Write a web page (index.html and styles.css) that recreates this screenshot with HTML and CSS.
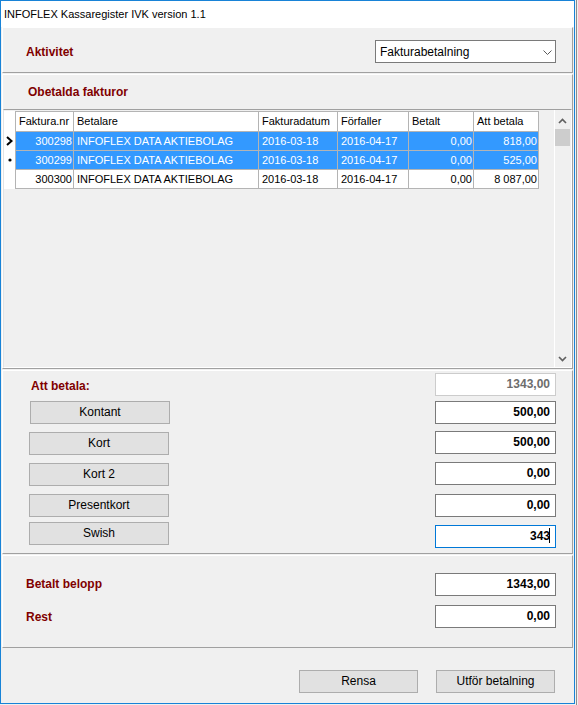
FILE: index.html
```html
<!DOCTYPE html>
<html lang="sv">
<head>
<meta charset="utf-8">
<title>INFOFLEX Kassaregister IVK version 1.1</title>
<link rel="stylesheet" href="styles.css">
</head>
<body>
<div class="screen">
  <div class="window">
    <div class="titlebar">INFOFLEX Kassaregister IVK version 1.1</div>
    <div class="client">
      <section class="panel panel-activity">
        <span class="label">Aktivitet</span>
        <div class="combo">
          <span>Fakturabetalning</span>
          <svg class="combo-arrow" width="9" height="5" viewBox="0 0 9 5"><polyline points="0.5,0.5 4.5,4.5 8.5,0.5" fill="none" stroke="#5a5a5a" stroke-width="1"/></svg>
        </div>
      </section>

      <section class="panel panel-invoices">
        <div class="panel-head"><span class="label">Obetalda fakturor</span></div>
        <div class="grid-box">
          <div class="grid-area">
            <div class="row head">
              <div class="rh"></div>
              <div class="c">Faktura.nr</div>
              <div class="c">Betalare</div>
              <div class="c">Fakturadatum</div>
              <div class="c">Förfaller</div>
              <div class="c">Betalt</div>
              <div class="c">Att betala</div>
            </div>
            <div class="row sel">
              <div class="rh"><svg width="11" height="18" viewBox="0 0 11 18"><polyline points="3,5 7.5,9 3,13" fill="none" stroke="#000" stroke-width="2"/></svg></div>
              <div class="c num">300298</div>
              <div class="c">INFOFLEX DATA AKTIEBOLAG</div>
              <div class="c">2016-03-18</div>
              <div class="c">2016-04-17</div>
              <div class="c num">0,00</div>
              <div class="c num">818,00</div>
            </div>
            <div class="row sel">
              <div class="rh"><svg width="11" height="18" viewBox="0 0 11 18"><circle cx="6" cy="9" r="1.6" fill="#000"/></svg></div>
              <div class="c num">300299</div>
              <div class="c">INFOFLEX DATA AKTIEBOLAG</div>
              <div class="c">2016-03-18</div>
              <div class="c">2016-04-17</div>
              <div class="c num">0,00</div>
              <div class="c num">525,00</div>
            </div>
            <div class="row">
              <div class="rh"></div>
              <div class="c num">300300</div>
              <div class="c">INFOFLEX DATA AKTIEBOLAG</div>
              <div class="c">2016-03-18</div>
              <div class="c">2016-04-17</div>
              <div class="c num">0,00</div>
              <div class="c num">8 087,00</div>
            </div>
          </div>
          <div class="vscroll">
            <div class="sb-btn sb-up"><svg width="16" height="18" viewBox="0 0 16 18"><polyline points="4,13 7.5,9.5 11,13" fill="none" stroke="#606060" stroke-width="1.7"/></svg></div>
            <div class="sb-thumb"></div>
            <div class="sb-track"></div>
            <div class="sb-btn sb-down"><svg width="16" height="17" viewBox="0 0 16 17"><polyline points="4,7 7.5,10.5 11,7" fill="none" stroke="#606060" stroke-width="1.7"/></svg></div>
          </div>
        </div>
      </section>

      <section class="panel panel-pay">
        <div class="pay-left">
          <span class="label label-due">Att betala:</span>
          <div class="btn btn-pay btn-kontant">Kontant</div>
          <div class="btn btn-pay btn-kort">Kort</div>
          <div class="btn btn-pay btn-kort2">Kort 2</div>
          <div class="btn btn-pay btn-present">Presentkort</div>
          <div class="btn btn-pay btn-swish">Swish</div>
        </div>
        <div class="pay-right">
          <div class="field readonly f-due">1343,00</div>
          <div class="field f-kontant">500,00</div>
          <div class="field f-kort">500,00</div>
          <div class="field f-kort2">0,00</div>
          <div class="field f-present">0,00</div>
          <div class="field focused f-swish">343<span class="caret"></span></div>
        </div>
      </section>

      <section class="panel panel-total">
        <div class="total-row"><span class="label label-paid">Betalt belopp</span><div class="field">1343,00</div></div>
        <div class="total-row"><span class="label">Rest</span><div class="field">0,00</div></div>
      </section>

      <div class="footer">
        <div class="btn btn-footer">Rensa</div>
        <div class="btn btn-footer">Utför betalning</div>
      </div>
    </div>
  </div>
  <div class="behind"></div>
</div>
</body>
</html>
```

FILE: styles.css
```css
* { box-sizing: border-box; }

body {
  margin: 0;
  background: #f0f0f0;
  font-family: "Liberation Sans", Arial, sans-serif;
  color: #000;
}

.screen {
  display: flex;
  width: 578px;
  height: 705px;
}

.window {
  width: 575px;
  height: 704px;
  border: 1px solid #1883d7;
  background: #f0f0f0;
  display: flex;
  flex-direction: column;
}

.titlebar {
  height: 26px;
  flex: none;
  background: #fff;
  font-size: 11px;
  line-height: 27px;
  padding-left: 3px;
  white-space: nowrap;
}

.client {
  flex: 1;
  display: flex;
  flex-direction: column;
  padding: 0 1px;
}

.panel {
  flex: none;
  border: 1px solid;
  border-color: #fff #a0a0a0 #a0a0a0 #fff;
  margin-bottom: 1px;
}

.label {
  color: #800000;
  font-weight: bold;
  font-size: 12px;
  line-height: 14px;
  white-space: nowrap;
}

/* Activity panel */
.panel-activity {
  height: 46px;
  display: flex;
  align-items: center;
  justify-content: space-between;
  padding: 3px 16px 0 23px;
}

.combo {
  width: 181px;
  height: 23px;
  border: 1px solid #7a7a7a;
  background: #fff;
  display: flex;
  align-items: center;
  justify-content: space-between;
  padding: 0 3px 0 4px;
  font-size: 12px;
}

.combo-arrow { display: block; margin-top: 1px; }

/* Invoices panel */
.panel-invoices {
  height: 295px;
  display: flex;
  flex-direction: column;
}

.panel-head {
  height: 34px;
  display: flex;
  align-items: center;
  padding-left: 25px;
}

.grid-box {
  height: 259px;
  border: 1px solid;
  border-color: #a0a0a0 #fff #fff #e3e3e3;
  display: flex;
}

.grid-area {
  flex: 1;
  padding-top: 1px;
  background: #f0f0f0;
}

.row {
  display: grid;
  grid-template-columns: 11px 58px 185px 79px 71px 65px 66px;
  font-size: 11px;
}

.rh {
  height: 19px;
  background: #fff;
}

.rh svg { display: block; }

.c {
  height: 19px;
  line-height: 18px;
  padding: 0 3px;
  border-left: 1px solid #b4b4b4;
  border-bottom: 1px solid #b4b4b4;
  background: #fff;
  white-space: nowrap;
  overflow: hidden;
}

.c:last-child { border-right: 1px solid #b4b4b4; }

.c.num {
  text-align: right;
  padding: 0 1px 0 2px;
}

.head .rh { height: 21px; }

.head .c {
  height: 21px;
  line-height: 19px;
  border-top: 1px solid #b4b4b4;
}

.sel .c {
  background: #3399ff;
  color: #fff;
}

/* Scrollbar */
.vscroll {
  width: 17px;
  border-left: 1px solid #fff;
  background: #f0f0f0;
  display: flex;
  flex-direction: column;
}

.sb-btn svg { display: block; }
.sb-up { height: 18px; }
.sb-down { height: 17px; }

.sb-thumb {
  height: 17px;
  margin: 1px 1px 0 0;
  background: #cdcdcd;
}

.sb-track { flex: 1; }

/* Payment panel */
.panel-pay {
  height: 184px;
  display: flex;
  justify-content: space-between;
  padding: 0 16px 0 26px;
}

.pay-left,
.pay-right {
  display: flex;
  flex-direction: column;
  align-items: flex-start;
}

.label-due { margin: 8px 0 0 2px; }

.btn {
  height: 23px;
  border: 1px solid #adadad;
  background: #e1e1e1;
  font-size: 12px;
  line-height: 21px;
  text-align: center;
  white-space: nowrap;
}

.btn-pay { width: 140px; }
.btn-kontant { margin: 8px 0 0 1px; }
.btn-kort { margin-top: 8px; }
.btn-kort2 { margin-top: 8px; }
.btn-present { margin-top: 8px; }
.btn-swish { margin-top: 5px; }

.field {
  width: 121px;
  height: 23px;
  border: 1px solid #7a7a7a;
  background: #fff;
  font-size: 12px;
  font-weight: bold;
  line-height: 21px;
  text-align: right;
  padding-right: 5px;
  white-space: nowrap;
}

.field.readonly {
  border-color: #cccccc;
  color: #6d6d6d;
}

.field.focused { border-color: #0078d7; }

.caret {
  display: inline-block;
  width: 1px;
  height: 15px;
  background: #000;
  vertical-align: -3px;
  margin-left: -1px;
}

.f-due { margin-top: 2px; }
.f-kontant { margin-top: 5px; }
.f-kort { margin-top: 7px; }
.f-kort2 { margin-top: 8px; }
.f-present { margin-top: 9px; }
.f-swish { margin-top: 8px; }

/* Totals panel */
.panel-total {
  height: 93px;
  padding: 17px 16px 0 23px;
  display: flex;
  flex-direction: column;
  gap: 9px;
}

.total-row {
  display: flex;
  align-items: center;
  justify-content: space-between;
}

.label-paid { margin-bottom: 2px; }

/* Footer */
.footer {
  flex: 1;
  display: flex;
  justify-content: flex-end;
  align-items: flex-start;
  gap: 18px;
  padding: 21px 18px 0 0;
}

.btn-footer { width: 119px; }

/* Window behind */
.behind {
  flex: 1;
  background:
    linear-gradient(to right, #f0f0f0 0 1px, #8c8c8c 1px 2px, #f0f0f0 2px);
}
```
